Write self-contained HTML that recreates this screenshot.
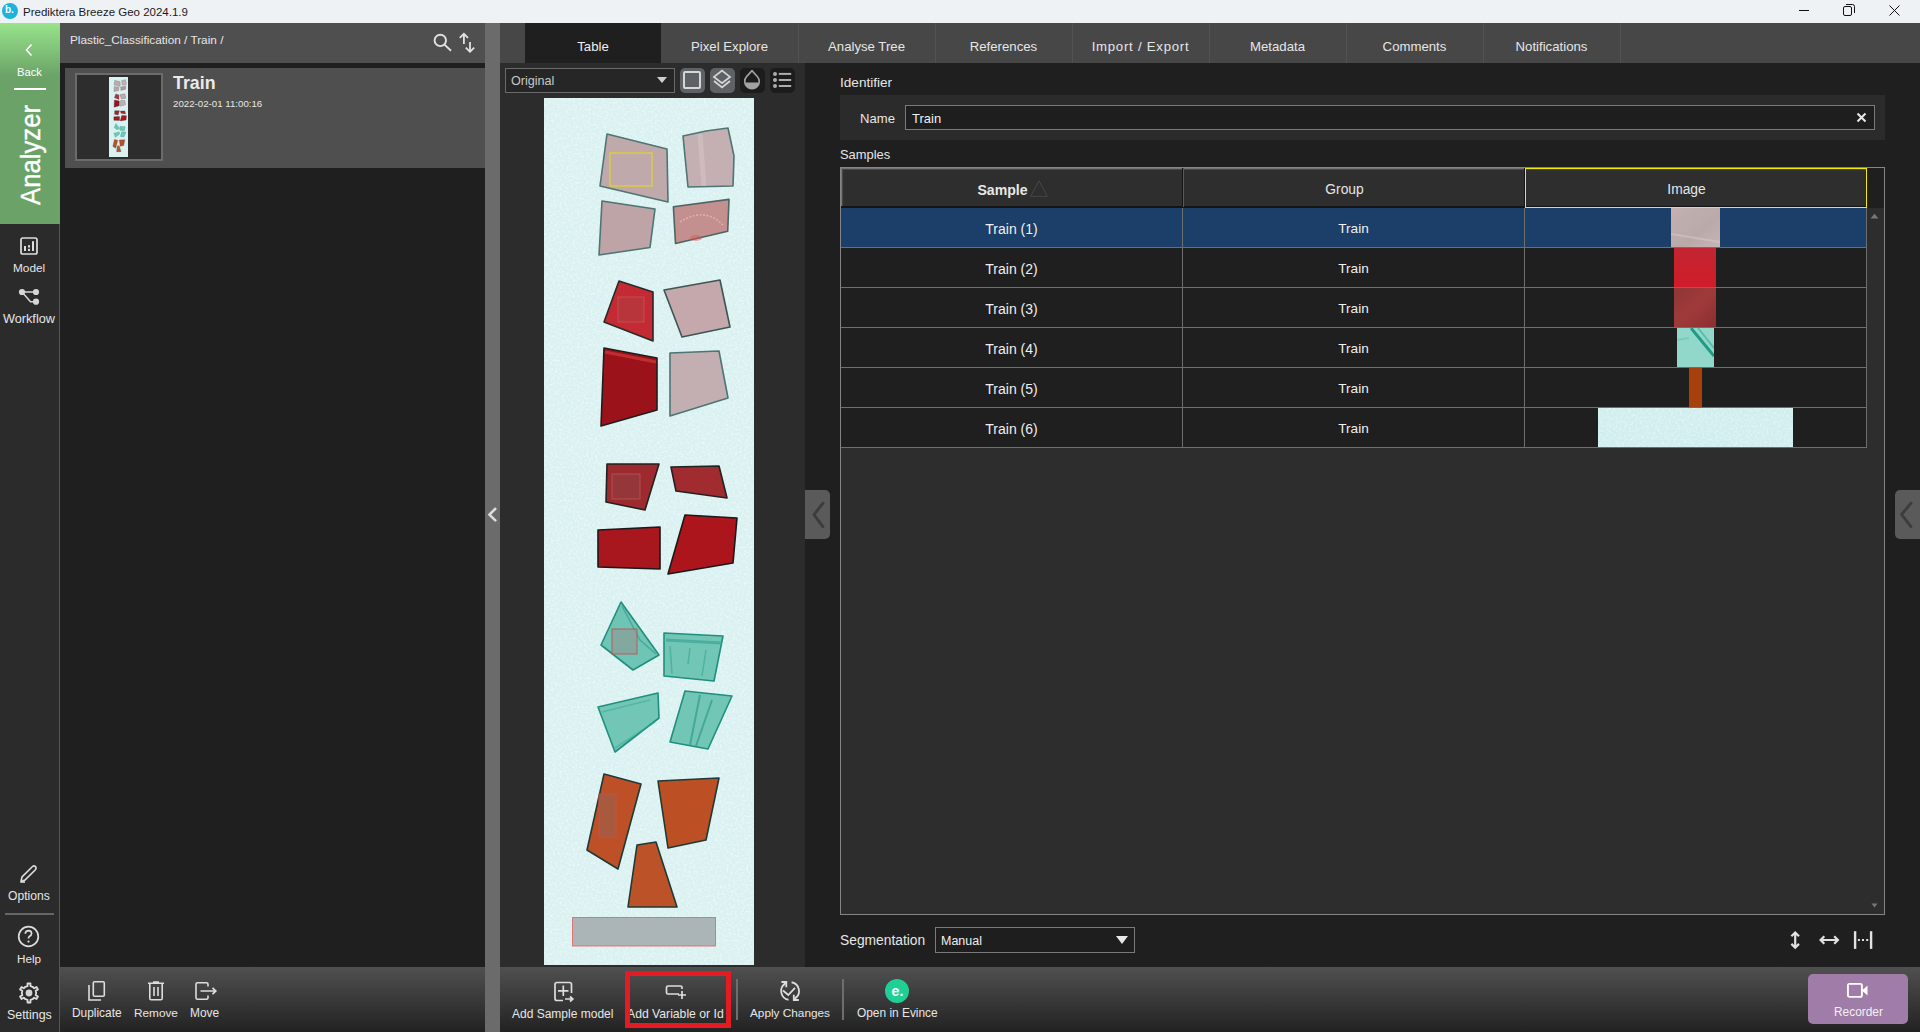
<!DOCTYPE html>
<html><head><meta charset="utf-8">
<style>
*{margin:0;padding:0;box-sizing:border-box}
html,body{width:1920px;height:1032px;overflow:hidden;background:#1f1f1f;font-family:"Liberation Sans",sans-serif;color:#e6e6e6}
.a{position:absolute}
.t{position:absolute;white-space:nowrap;line-height:1}
</style></head><body>
<!-- TITLE BAR -->
<div class="a" style="left:0;top:0;width:1920px;height:23px;background:#eef2f5"></div>
<div class="a" style="left:2px;top:3px;width:16px;height:16px;border-radius:50%;background:#1db4dc"></div>
<div class="t" style="left:5px;top:5px;font-size:10px;font-weight:bold;color:#fff">b.</div>
<div class="t" style="left:23px;top:7px;font-size:11.5px;color:#1a1a1a">Prediktera Breeze Geo 2024.1.9</div>
<div class="a" style="left:1799px;top:10px;width:10px;height:1px;background:#111"></div>
<svg class="a" style="left:1843px;top:4px" width="12" height="12" viewBox="0 0 12 12"><rect x="0.5" y="2.5" width="8" height="9" rx="1.5" fill="none" stroke="#111" stroke-width="1"/><path d="M3 0.5 H9.5 A2 2 0 0 1 11.5 2.5 V9" fill="none" stroke="#111" stroke-width="1"/></svg>
<svg class="a" style="left:1889px;top:5px" width="11" height="11" viewBox="0 0 11 11"><path d="M0.5 0.5 L10.5 10.5 M10.5 0.5 L0.5 10.5" stroke="#111" stroke-width="1"/></svg>

<!-- LEFT NAV -->
<div class="a" style="left:0;top:23px;width:60px;height:1009px;background:#2b2b2b;border-right:1px solid #555"></div>
<div class="a" style="left:0;top:23px;width:60px;height:201px;background:linear-gradient(#98e38b 0px,#6aa267 54px,#6aa267 201px)"></div>
<svg class="a" style="left:24px;top:43px" width="10" height="14" viewBox="0 0 10 14"><path d="M7.5 1.5 L2.5 7 L7.5 12.5" fill="none" stroke="#fff" stroke-width="1.6"/></svg>
<div class="t" style="left:17px;top:67px;font-size:11.2px;color:#fff">Back</div>
<div class="a" style="left:14px;top:88px;width:32px;height:2px;background:#fff"></div>
<div class="t" style="left:-24px;top:141px;width:109px;height:28px;text-align:center;font-size:28px;color:#fff;-webkit-text-stroke:0.4px #fff;transform:rotate(-90deg) scaleX(0.918)">Analyzer</div>
<!-- model -->
<svg class="a" style="left:19px;top:236px" width="20" height="20" viewBox="0 0 20 20"><rect x="2" y="2" width="16" height="16" rx="1.8" fill="none" stroke="#ddd" stroke-width="1.7"/><rect x="5" y="10" width="2" height="5" fill="#ddd"/><rect x="9" y="9.2" width="2" height="2.3" fill="#ddd"/><rect x="9" y="12.8" width="2" height="2.2" fill="#ddd"/><rect x="13" y="5.2" width="2" height="9.8" fill="#ddd"/></svg>
<div class="t" style="left:13px;top:263px;font-size:11.8px;color:#e6e6e6">Model</div>
<svg class="a" style="left:18px;top:287px" width="22" height="20" viewBox="0 0 22 20"><circle cx="4" cy="5" r="3.1" fill="#d6d6d6"/><circle cx="18" cy="5" r="3.1" fill="#d6d6d6"/><circle cx="18" cy="14.7" r="3.1" fill="#d6d6d6"/><path d="M4 5 H18 M4 5 L12.5 14.7 H18" fill="none" stroke="#d6d6d6" stroke-width="1.5"/></svg>
<div class="t" style="left:3px;top:313px;font-size:12.7px;color:#e6e6e6">Workflow</div>
<!-- options -->
<svg class="a" style="left:19px;top:864px" width="20" height="20" viewBox="0 0 20 20"><path d="M2 17.5 L3 13 L13.5 2.5 Q15 1.3 16.5 2.6 Q17.8 4 16.6 5.5 L6 16 Z" fill="none" stroke="#ddd" stroke-width="1.6"/><path d="M2 18 H6" stroke="#ddd" stroke-width="1.6"/></svg>
<div class="t" style="left:8px;top:890px;font-size:12.1px;color:#e6e6e6">Options</div>
<div class="a" style="left:5px;top:913px;width:49px;height:2px;background:#666"></div>
<svg class="a" style="left:17px;top:925px" width="23" height="23" viewBox="0 0 23 23"><circle cx="11.5" cy="11.5" r="9.8" fill="none" stroke="#ddd" stroke-width="1.7"/><path d="M8.3 8.8 Q8.5 5.6 11.6 5.6 Q14.6 5.7 14.6 8.5 Q14.5 10.3 12.6 11.3 Q11.5 12 11.5 13.6" fill="none" stroke="#ddd" stroke-width="1.7"/><circle cx="11.5" cy="16.6" r="1.1" fill="#ddd"/></svg>
<div class="t" style="left:17px;top:953px;font-size:11.7px;color:#e6e6e6">Help</div>
<svg class="a" style="left:18px;top:982px" width="22" height="22" viewBox="0 0 22 22"><path d="M9.54 4.15 L9.50 1.52 L12.50 1.52 L12.46 4.15 L14.60 4.76 L16.20 6.32 L18.46 4.96 L19.96 7.56 L17.66 8.84 L18.20 11.00 L17.66 13.16 L19.96 14.44 L18.46 17.04 L16.20 15.68 L14.60 17.24 L12.46 17.85 L12.50 20.48 L9.50 20.48 L9.54 17.85 L7.40 17.24 L5.80 15.68 L3.54 17.04 L2.04 14.44 L4.34 13.16 L3.80 11.00 L4.34 8.84 L2.04 7.56 L3.54 4.96 L5.80 6.32 L7.40 4.76 Z" fill="none" stroke="#ddd" stroke-width="1.8" stroke-linejoin="round"/><circle cx="11" cy="11" r="3.4" fill="#d4d4d4"/></svg>
<div class="t" style="left:7px;top:1009px;font-size:12.4px;color:#e6e6e6">Settings</div>

<!-- LEFT PANEL -->
<div class="a" style="left:60px;top:23px;width:425px;height:40px;background:#4f4f4f"></div>
<div class="t" style="left:70px;top:35px;font-size:11.8px;color:#e6e6e6">Plastic_Classification / Train /</div>
<svg class="a" style="left:430px;top:30px" width="24" height="26" viewBox="0 0 24 26"><circle cx="10.3" cy="10.4" r="5.7" fill="none" stroke="#e2e2e2" stroke-width="1.9"/><path d="M14.5 14.6 L21 20.8" stroke="#e2e2e2" stroke-width="1.9"/></svg>
<svg class="a" style="left:455px;top:30px" width="24" height="26" viewBox="0 0 24 26"><path d="M8.9 4 V14 M4.8 7.9 L8.9 3.8 L13 7.9" fill="none" stroke="#e2e2e2" stroke-width="1.8"/><path d="M15 12 V21.5 M10.8 17.7 L15 21.8 L19.2 17.7" fill="none" stroke="#e2e2e2" stroke-width="1.8"/></svg>
<div class="a" style="left:65px;top:68px;width:420px;height:100px;background:#4f4f4f"></div>
<div class="a" style="left:75px;top:73px;width:88px;height:88px;background:#2d2d2d;border:2px solid #6b6b6b"></div><!--THUMBSLOT--><!--THUMB--><svg class="a" style="left:109px;top:77px" width="19" height="80" viewBox="544 98 210 867" preserveAspectRatio="none">
<rect x="544" y="98" width="210" height="867" fill="#daf1f1"/>
<polygon points="607,134 667,149 668,202 600,186" fill="#c0a9ab" stroke="#4d7573" stroke-width="3" stroke-linejoin="round"/>
<polygon points="683,136 706,131 728,128 734,156 733,186 688,187" fill="#c4b0b2" stroke="#4d7573" stroke-width="3" stroke-linejoin="round"/>
<polygon points="602,201 655,209 650,247.5 599,255" fill="#bea4a7" stroke="#4d7573" stroke-width="3" stroke-linejoin="round"/>
<polygon points="673.4,206.8 729,199.4 727.7,231.3 675.5,243.5" fill="#c48f8f" stroke="#4d6563" stroke-width="3" stroke-linejoin="round"/>
<polygon points="619,281 653,292 653,341 604,322" fill="#c32a33" stroke="#2a2a2a" stroke-width="3" stroke-linejoin="round"/>
<polygon points="664,290 720,280 730,327 682,337" fill="#c4a8ab" stroke="#3d5553" stroke-width="3" stroke-linejoin="round"/>
<polygon points="604,348 657,358 657,410 601,426" fill="#9c121a" stroke="#1e1e1e" stroke-width="3" stroke-linejoin="round"/>
<polygon points="670,353 719,351 728,398 670,416" fill="#c3aeb1" stroke="#4d7573" stroke-width="3" stroke-linejoin="round"/>
<polygon points="607,464 659,464 645,510 606,502" fill="#9c2a2e" stroke="#222" stroke-width="3" stroke-linejoin="round"/>
<polygon points="671,467 719,466 727,498 676,491" fill="#a02c2f" stroke="#222" stroke-width="3" stroke-linejoin="round"/>
<polygon points="598,530 660,527 660,569 598,567" fill="#a8161e" stroke="#1a1a1a" stroke-width="3" stroke-linejoin="round"/>
<polygon points="685,515 737,518 733,563 668,574" fill="#ad151d" stroke="#1a1a1a" stroke-width="3" stroke-linejoin="round"/>
<polygon points="621,602 659,655 633,670 601,645" fill="#6fc5b5" stroke="#1f8f7e" stroke-width="3" stroke-linejoin="round"/>
<polygon points="664,633 723,636 714,681 664,676" fill="#72c6b6" stroke="#1f8f7e" stroke-width="3" stroke-linejoin="round"/>
<polygon points="598,707 658,693 659,718 615,752" fill="#72c6b6" stroke="#1f8f7e" stroke-width="3" stroke-linejoin="round"/>
<polygon points="685,691 732,696 708,749 670,742" fill="#72c6b6" stroke="#1f8f7e" stroke-width="3" stroke-linejoin="round"/>
<polygon points="604,774 641,784 618,869 587,850" fill="#bd5026" stroke="#1f3a36" stroke-width="3" stroke-linejoin="round"/>
<polygon points="658,781 719,778 706,840 668,848" fill="#bd4f25" stroke="#1f3a36" stroke-width="3" stroke-linejoin="round"/>
<polygon points="637,845 656,842 677,907 628,907" fill="#bb5228" stroke="#1f3a36" stroke-width="3" stroke-linejoin="round"/>
</svg><!--/THUMB-->
<div class="t" style="left:173px;top:75px;font-size:17.8px;font-weight:bold;color:#eaeaea">Train</div>
<div class="t" style="left:173px;top:99px;font-size:9.7px;color:#e6e6e6">2022-02-01 11:00:16</div>
<div class="a" style="left:60px;top:967px;width:425px;height:65px;background:linear-gradient(#505050,#222)"></div>
<!-- SPLITTER -->
<div class="a" style="left:485px;top:23px;width:15px;height:1009px;background:#6b6b6b"></div>
<svg class="a" style="left:487px;top:507px" width="11" height="15" viewBox="0 0 11 15"><path d="M8.3 1.8 L2.4 7.6 L8.3 13.4" fill="none" stroke="#ddd" stroke-width="2.6" stroke-linecap="round" stroke-linejoin="round"/></svg>

<!-- TAB BAR -->
<div class="a" style="left:500px;top:23px;width:1420px;height:40px;background:#474747"></div>
<div class="a" style="left:525px;top:23px;width:136px;height:40px;background:#1f1f1f"></div>
<div class="a" style="left:798px;top:23px;width:1px;height:40px;background:#525252"></div>
<div class="a" style="left:935px;top:23px;width:1px;height:40px;background:#525252"></div>
<div class="a" style="left:1072px;top:23px;width:1px;height:40px;background:#525252"></div>
<div class="a" style="left:1209px;top:23px;width:1px;height:40px;background:#525252"></div>
<div class="a" style="left:1346px;top:23px;width:1px;height:40px;background:#525252"></div>
<div class="a" style="left:1483px;top:23px;width:1px;height:40px;background:#525252"></div>
<div class="a" style="left:1620px;top:23px;width:1px;height:40px;background:#525252"></div>
<div class="t" style="left:525px;width:136px;text-align:center;top:40px;font-size:13.2px;color:#f0f0f0">Table</div>
<div class="t" style="left:661px;width:137px;text-align:center;top:40px;font-size:13.2px;color:#e6e6e6">Pixel Explore</div>
<div class="t" style="left:798px;width:137px;text-align:center;top:40px;font-size:13.2px;color:#e6e6e6">Analyse Tree</div>
<div class="t" style="left:935px;width:137px;text-align:center;top:40px;font-size:13.2px;color:#e6e6e6">References</div>
<div class="t" style="left:1072px;width:137px;text-align:center;top:40px;font-size:13.2px;color:#e6e6e6;letter-spacing:0.75px">Import / Export</div>
<div class="t" style="left:1209px;width:137px;text-align:center;top:40px;font-size:13.2px;color:#e6e6e6">Metadata</div>
<div class="t" style="left:1346px;width:137px;text-align:center;top:40px;font-size:13.2px;color:#e6e6e6">Comments</div>
<div class="t" style="left:1483px;width:137px;text-align:center;top:40px;font-size:13.2px;color:#e6e6e6">Notifications</div>

<!-- CENTER PANEL -->
<div class="a" style="left:500px;top:63px;width:305px;height:904px;background:#2c2c2c"></div>
<div class="a" style="left:505px;top:68px;width:170px;height:25px;background:#262626;border:1px solid #6a6a6a"></div>
<div class="t" style="left:511px;top:75px;font-size:12.6px;color:#c8c8c8">Original</div>
<svg class="a" style="left:656px;top:76px" width="12" height="8" viewBox="0 0 12 8"><path d="M1 1 H11 L6 7 Z" fill="#cfcfcf"/></svg>
<div class="a" style="left:680px;top:68px;width:25px;height:25px;border-radius:5px;background:#5f6265"></div>
<div class="a" style="left:683px;top:71px;width:18px;height:18px;border-radius:2px;border:2px solid #d6d6d6"></div>
<div class="a" style="left:710px;top:68px;width:25px;height:25px;border-radius:5px;background:#5f6265"></div>
<svg class="a" style="left:711px;top:68px" width="22" height="22" viewBox="0 0 22 22"><path d="M11 2.6 L19 8.9 L11 15.2 L3 8.9 Z" fill="none" stroke="#d6d6d6" stroke-width="1.8" stroke-linejoin="miter"/><path d="M3 13 L11 19.4 L19 13" fill="none" stroke="#d6d6d6" stroke-width="1.8"/></svg>
<div class="a" style="left:740px;top:68px;width:25px;height:25px;border-radius:5px;background:#1c1c1c"></div>
<svg class="a" style="left:742px;top:69px" width="20" height="22" viewBox="0 0 20 22"><path d="M10 1.6 L4.54 7.66 A7.3 7.3 0 1 0 15.46 7.66 Z" fill="none" stroke="#a2a2a2" stroke-width="1.6" stroke-linejoin="round"/><path d="M2.74 13.4 H17.26 A7.3 7.3 0 0 1 2.74 13.4 Z" fill="#a2a2a2"/></svg>
<div class="a" style="left:770px;top:68px;width:25px;height:25px;border-radius:5px;background:#1c1c1c"></div>
<svg class="a" style="left:771px;top:69px" width="24" height="22" viewBox="0 0 24 22"><g fill="#acacac"><circle cx="4" cy="4.9" r="2"/><circle cx="4" cy="11" r="2"/><circle cx="4" cy="17" r="2"/><rect x="7.8" y="3.9" width="12.4" height="2"/><rect x="7.8" y="10" width="12.4" height="2"/><rect x="7.8" y="16" width="12.4" height="2"/></g></svg>
<!--IMGSLOT--><!--IMG--><svg width="0" height="0" style="position:absolute"><filter id="nz"><feTurbulence type="fractalNoise" baseFrequency="0.45" numOctaves="2" seed="3"/><feColorMatrix values="0 0 0 0 1  0 0 0 0 1  0 0 0 0 1  0 0 0 1.6 -0.7"/></filter></svg><svg class="a" style="left:544px;top:98px" width="210" height="867" viewBox="544 98 210 867" preserveAspectRatio="none">
<rect x="544" y="98" width="210" height="867" fill="#daf1f1"/>
<rect x="544" y="98" width="210" height="867" fill="#f2fdfd" opacity="0.75" filter="url(#nz)"/>
<polygon points="607,134 667,149 668,202 600,186" fill="#c0a9ab" stroke="#4d7573" stroke-width="1.6" stroke-linejoin="round"/>
<polygon points="683,136 706,131 728,128 734,156 733,186 688,187" fill="#c4b0b2" stroke="#4d7573" stroke-width="1.6" stroke-linejoin="round"/>
<polygon points="602,201 655,209 650,247.5 599,255" fill="#bea4a7" stroke="#4d7573" stroke-width="1.6" stroke-linejoin="round"/>
<polygon points="673.4,206.8 729,199.4 727.7,231.3 675.5,243.5" fill="#c48f8f" stroke="#4d6563" stroke-width="1.6" stroke-linejoin="round"/>
<polygon points="619,281 653,292 653,341 604,322" fill="#c32a33" stroke="#2a2a2a" stroke-width="1.6" stroke-linejoin="round"/>
<polygon points="664,290 720,280 730,327 682,337" fill="#c4a8ab" stroke="#3d5553" stroke-width="1.6" stroke-linejoin="round"/>
<polygon points="604,348 657,358 657,410 601,426" fill="#9c121a" stroke="#1e1e1e" stroke-width="1.6" stroke-linejoin="round"/>
<polygon points="670,353 719,351 728,398 670,416" fill="#c3aeb1" stroke="#4d7573" stroke-width="1.6" stroke-linejoin="round"/>
<polygon points="607,464 659,464 645,510 606,502" fill="#9c2a2e" stroke="#222" stroke-width="1.6" stroke-linejoin="round"/>
<polygon points="671,467 719,466 727,498 676,491" fill="#a02c2f" stroke="#222" stroke-width="1.6" stroke-linejoin="round"/>
<polygon points="598,530 660,527 660,569 598,567" fill="#a8161e" stroke="#1a1a1a" stroke-width="1.6" stroke-linejoin="round"/>
<polygon points="685,515 737,518 733,563 668,574" fill="#ad151d" stroke="#1a1a1a" stroke-width="1.6" stroke-linejoin="round"/>
<polygon points="621,602 659,655 633,670 601,645" fill="#6fc5b5" stroke="#1f8f7e" stroke-width="1.6" stroke-linejoin="round"/>
<polygon points="664,633 723,636 714,681 664,676" fill="#72c6b6" stroke="#1f8f7e" stroke-width="1.6" stroke-linejoin="round"/>
<polygon points="598,707 658,693 659,718 615,752" fill="#72c6b6" stroke="#1f8f7e" stroke-width="1.6" stroke-linejoin="round"/>
<polygon points="685,691 732,696 708,749 670,742" fill="#72c6b6" stroke="#1f8f7e" stroke-width="1.6" stroke-linejoin="round"/>
<polygon points="604,774 641,784 618,869 587,850" fill="#bd5026" stroke="#1f3a36" stroke-width="1.6" stroke-linejoin="round"/>
<polygon points="658,781 719,778 706,840 668,848" fill="#bd4f25" stroke="#1f3a36" stroke-width="1.6" stroke-linejoin="round"/>
<polygon points="637,845 656,842 677,907 628,907" fill="#bb5228" stroke="#1f3a36" stroke-width="1.6" stroke-linejoin="round"/>
<path d="M666 640 L722 643" stroke="#3aa696" stroke-width="3" opacity="0.7"/>
<path d="M670 646 L672 674 M690 648 L688 664 M706 650 L702 676" stroke="#3aa696" stroke-width="1.6" opacity="0.6"/>
<path d="M700 695 L690 745 M712 700 L696 746" stroke="#2f9888" stroke-width="2" opacity="0.65"/>
<path d="M622 606 L640 640 L656 654" stroke="#2f9888" stroke-width="1.6" fill="none" opacity="0.6"/>
<path d="M602 712 L650 700 M615 748 L655 722" stroke="#3aa696" stroke-width="1.5" fill="none" opacity="0.5"/>
<path d="M605 352 L656 362" stroke="#d03a3a" stroke-width="3" opacity="0.7"/>
<path d="M680 222 Q705 206 724 226" stroke="#e6b0b0" stroke-width="1.4" fill="none" stroke-dasharray="2 1.5"/>
<ellipse cx="696" cy="238" rx="6" ry="3" fill="#e05050" opacity="0.45"/>
<path d="M700 134 L704 186" stroke="#d8c6c8" stroke-width="5" opacity="0.5"/>
<rect x="610" y="153" width="42" height="33" fill="none" fill-opacity="1" stroke="#f0e000" stroke-width="0.9"/>
<rect x="618" y="297" width="26" height="25" fill="#a04a4a" fill-opacity="0.35" stroke="#c85050" stroke-width="0.9"/>
<rect x="612" y="474" width="28" height="25" fill="#8a5050" fill-opacity="0.35" stroke="#b85050" stroke-width="0.9"/>
<rect x="612" y="629" width="25" height="25" fill="#8a9d9a" fill-opacity="0.75" stroke="#c05050" stroke-width="0.9"/>
<rect x="599" y="794" width="17" height="43" fill="#9a6050" fill-opacity="0.6" stroke="#c85050" stroke-width="0.9"/>
<rect x="572.5" y="917.5" width="143.0" height="28.5" fill="#abb5b7" fill-opacity="1" stroke="#e26a6a" stroke-width="0.9"/>
</svg><!--/IMG-->
<!-- collapse tab -->
<div class="a" style="left:805px;top:490px;width:25px;height:49px;background:#5a5a5a;border-radius:0 5px 5px 0"></div>
<svg class="a" style="left:811px;top:500px" width="16" height="30" viewBox="0 0 16 30"><path d="M12 3.2 L3 14.7 L12 26.8" fill="none" stroke="#3c3c3c" stroke-width="2.8" stroke-linecap="round" stroke-linejoin="round"/></svg>

<!-- RIGHT PANEL -->
<div class="t" style="left:840px;top:76px;font-size:13.6px;color:#e6e6e6">Identifier</div>
<div class="a" style="left:840px;top:95px;width:1045px;height:45px;background:#2b2b2b"></div>
<div class="t" style="left:860px;top:112px;font-size:13.1px;color:#e6e6e6">Name</div>
<div class="a" style="left:905px;top:105px;width:970px;height:25px;background:#1e1e1e;border:1px solid #7a7a7a"></div>
<div class="t" style="left:912px;top:112px;font-size:13px;color:#f0f0f0">Train</div>
<svg class="a" style="left:1856px;top:112px" width="11" height="11" viewBox="0 0 11 11"><path d="M1.5 1.5 L9.5 9.5 M9.5 1.5 L1.5 9.5" stroke="#e8e8e8" stroke-width="2"/></svg>
<div class="t" style="left:840px;top:149px;font-size:12.9px;color:#e6e6e6">Samples</div>
<!-- table -->
<div class="a" style="left:840px;top:167px;width:1045px;height:748px;background:#2d2d2d;border:1px solid #858585"></div>
<div class="a" style="left:841px;top:168px;width:1026px;height:39px;background:#2e2e2e;box-shadow:inset 1px 1px 0 #747474,inset 2px 2px 1px #4a4a4a"></div>
<div class="a" style="left:841px;top:206px;width:1026px;height:2px;background:#141414"></div>
<div class="a" style="left:1182px;top:168px;width:1px;height:39px;background:#141414"></div>
<div class="a" style="left:1183px;top:168px;width:1px;height:39px;background:#5a5a5a"></div>
<div class="a" style="left:1524px;top:168px;width:1px;height:39px;background:#141414"></div>
<div class="a" style="left:1525px;top:168px;width:342px;height:40px;border:1px solid #f2ea00"></div>
<div class="a" style="left:1867px;top:168px;width:17px;height:40px;background:#1f1f1f"></div>
<div class="a" style="left:1867px;top:208px;width:17px;height:706px;background:#2d2d2d"></div>
<svg class="a" style="left:1870px;top:213px" width="9" height="6" viewBox="0 0 9 6"><path d="M0.5 5.5 L4.5 0.8 L8.5 5.5 Z" fill="#777"/></svg>
<svg class="a" style="left:1871px;top:903px" width="7" height="5" viewBox="0 0 7 5"><path d="M0.5 0.5 L3.5 4.5 L6.5 0.5 Z" fill="#777"/></svg>
<div class="t" style="left:841px;width:342px;text-align:center;top:183px;font-size:14.1px;font-weight:bold;color:#e8e8e8;padding-right:19px">Sample</div>
<svg class="a" style="left:1030px;top:180px" width="18" height="17" viewBox="0 0 18 17"><path d="M9 0.8 L17.3 16.3 H0.7 Z" fill="none" stroke="#474747" stroke-width="1"/></svg>
<div class="t" style="left:1183px;width:342px;text-align:center;top:183px;font-size:13.8px;color:#e6e6e6;padding-right:19px">Group</div>
<div class="t" style="left:1525px;width:342px;text-align:center;top:183px;font-size:13.8px;color:#e6e6e6;padding-right:19px">Image</div>
<!-- rows -->
<div class="a" style="left:841px;top:208px;width:1026px;height:39px;background:#1c3f6a"></div>
<div class="a" style="left:841px;top:247px;width:1026px;height:1px;background:#6e6e6e"></div>
<svg class="a" style="left:1671px;top:208px" width="49" height="39"><defs><linearGradient id="r1" x1="0" y1="0" x2="1" y2="1"><stop offset="0" stop-color="#c4b0b2"/><stop offset="0.6" stop-color="#b9aaa9"/><stop offset="1" stop-color="#c8b4b6"/></linearGradient></defs><rect width="49" height="39" fill="url(#r1)"/><path d="M0 26 L49 34" stroke="#d6c6c8" stroke-width="2" opacity="0.6"/></svg>
<div class="t" style="left:841px;width:341px;text-align:center;top:222px;font-size:14px;color:#f0f0f0">Train (1)</div>
<div class="t" style="left:1183px;width:341px;text-align:center;top:222px;font-size:13.6px;color:#f0f0f0">Train</div>
<div class="a" style="left:841px;top:248px;width:1026px;height:39px;background:#1f1f1f"></div>
<div class="a" style="left:841px;top:287px;width:1026px;height:1px;background:#6e6e6e"></div>
<svg class="a" style="left:1674px;top:248px" width="42" height="39"><defs><linearGradient id="r2" x1="0" y1="0" x2="0" y2="1"><stop offset="0" stop-color="#c22532"/><stop offset="1" stop-color="#d01c28"/></linearGradient></defs><rect width="42" height="39" fill="url(#r2)"/></svg>
<div class="t" style="left:841px;width:341px;text-align:center;top:262px;font-size:14px;color:#f0f0f0">Train (2)</div>
<div class="t" style="left:1183px;width:341px;text-align:center;top:262px;font-size:13.6px;color:#f0f0f0">Train</div>
<div class="a" style="left:841px;top:288px;width:1026px;height:39px;background:#1f1f1f"></div>
<div class="a" style="left:841px;top:327px;width:1026px;height:1px;background:#6e6e6e"></div>
<svg class="a" style="left:1674px;top:288px" width="42" height="39"><defs><linearGradient id="r3" x1="0" y1="0" x2="1" y2="1"><stop offset="0" stop-color="#903535"/><stop offset="0.5" stop-color="#a03a3a"/><stop offset="1" stop-color="#8a2e30"/></linearGradient></defs><rect width="42" height="39" fill="url(#r3)"/></svg>
<div class="t" style="left:841px;width:341px;text-align:center;top:302px;font-size:14px;color:#f0f0f0">Train (3)</div>
<div class="t" style="left:1183px;width:341px;text-align:center;top:302px;font-size:13.6px;color:#f0f0f0">Train</div>
<div class="a" style="left:841px;top:328px;width:1026px;height:39px;background:#1f1f1f"></div>
<div class="a" style="left:841px;top:367px;width:1026px;height:1px;background:#6e6e6e"></div>
<svg class="a" style="left:1677px;top:328px" width="37" height="39"><rect width="37" height="39" fill="#92d8ca"/><path d="M14 0 L37 28" stroke="#1f9a88" stroke-width="3"/><path d="M21 0 L37 20" stroke="#5cbcac" stroke-width="2"/><path d="M0 12 L12 10" stroke="#6cc8b8" stroke-width="2" opacity="0.7"/></svg>
<div class="t" style="left:841px;width:341px;text-align:center;top:342px;font-size:14px;color:#f0f0f0">Train (4)</div>
<div class="t" style="left:1183px;width:341px;text-align:center;top:342px;font-size:13.6px;color:#f0f0f0">Train</div>
<div class="a" style="left:841px;top:368px;width:1026px;height:39px;background:#1f1f1f"></div>
<div class="a" style="left:841px;top:407px;width:1026px;height:1px;background:#6e6e6e"></div>
<div class="a" style="left:1689px;top:368px;width:13px;height:39px;background:#a8400e"></div>
<div class="t" style="left:841px;width:341px;text-align:center;top:382px;font-size:14px;color:#f0f0f0">Train (5)</div>
<div class="t" style="left:1183px;width:341px;text-align:center;top:382px;font-size:13.6px;color:#f0f0f0">Train</div>
<div class="a" style="left:841px;top:408px;width:1026px;height:39px;background:#1f1f1f"></div>
<div class="a" style="left:841px;top:447px;width:1026px;height:1px;background:#6e6e6e"></div>
<svg class="a" style="left:1598px;top:408px" width="195" height="39"><rect width="195" height="39" fill="#d0eeee"/><rect width="195" height="39" fill="#f2fdfd" opacity="0.7" filter="url(#nz)"/></svg>
<div class="t" style="left:841px;width:341px;text-align:center;top:422px;font-size:14px;color:#f0f0f0">Train (6)</div>
<div class="t" style="left:1183px;width:341px;text-align:center;top:422px;font-size:13.6px;color:#f0f0f0">Train</div>
<div class="a" style="left:1182px;top:208px;width:1px;height:240px;background:#6e6e6e"></div>
<div class="a" style="left:1524px;top:208px;width:1px;height:240px;background:#6e6e6e"></div>
<div class="a" style="left:1866px;top:208px;width:1px;height:240px;background:#6e6e6e"></div>
<!-- segmentation -->
<div class="t" style="left:840px;top:934px;font-size:13.8px;color:#e6e6e6">Segmentation</div>
<div class="a" style="left:935px;top:927px;width:200px;height:26px;background:#1e1e1e;border:1px solid #7a7a7a"></div>
<div class="t" style="left:941px;top:935px;font-size:12.5px;color:#f0f0f0">Manual</div>
<svg class="a" style="left:1115px;top:935px" width="14" height="10" viewBox="0 0 14 10"><path d="M1 1 H13 L7 9 Z" fill="#e8e8e8"/></svg>
<svg class="a" style="left:1785px;top:928px" width="20" height="24" viewBox="0 0 20 24"><path d="M10.2 4.6 V19.6 M6.4 8.3 L10.2 4.5 L14 8.3 M6.4 15.9 L10.2 19.7 L14 15.9" fill="none" stroke="#e2e2e2" stroke-width="2.2"/></svg>
<svg class="a" style="left:1815px;top:930px" width="28" height="20" viewBox="0 0 28 20"><path d="M6 10 H22.5 M9.3 6.3 L5.6 10 L9.3 13.7 M19.2 6.3 L22.9 10 L19.2 13.7" fill="none" stroke="#e2e2e2" stroke-width="2.2"/></svg>
<svg class="a" style="left:1850px;top:928px" width="26" height="24" viewBox="0 0 26 24"><g fill="#e2e2e2"><rect x="3.9" y="3.2" width="2.4" height="17.7"/><rect x="19.9" y="3.2" width="2.4" height="17.7"/><rect x="7.9" y="11" width="2" height="2"/><rect x="12" y="11" width="2" height="2"/><rect x="16.2" y="11" width="2" height="2"/></g></svg>
<div class="a" style="left:1895px;top:490px;width:25px;height:49px;background:#5a5a5a;border-radius:5px 0 0 5px"></div>
<svg class="a" style="left:1899px;top:500px" width="16" height="30" viewBox="0 0 16 30"><path d="M12 3.2 L2.6 14.5 L12 26.7" fill="none" stroke="#3c3c3c" stroke-width="2.8" stroke-linecap="round" stroke-linejoin="round"/></svg>

<!-- BOTTOM TOOLBAR -->
<div class="a" style="left:500px;top:967px;width:1420px;height:65px;background:linear-gradient(#505050,#222)"></div>
<svg class="a" style="left:553px;top:981px" width="22" height="22" viewBox="0 0 22 22"><path d="M10 19.5 H4 Q2 19.5 2 17.5 V3.5 Q2 1.5 4 1.5 H16.5 Q18.5 1.5 18.5 3.5 V12" fill="none" stroke="#ddd" stroke-width="1.7"/><path d="M10.3 4.5 V15 M5 9.8 H15.5" stroke="#ddd" stroke-width="1.7"/><path d="M12 18 H19.5 M17 15.5 L19.8 18 L17 20.5" fill="none" stroke="#ddd" stroke-width="1.7"/></svg>
<div class="t" style="left:512px;top:1007.5px;font-size:12px;color:#e6e6e6">Add Sample model</div>
<svg class="a" style="left:665px;top:985px" width="23" height="15" viewBox="0 0 23 15"><path d="M14 9 H3 Q1.5 9 1.5 7.5 V2.5 Q1.5 1 3 1 H15.5 Q17 1 17 2.5 V4" fill="none" stroke="#ddd" stroke-width="1.7"/><path d="M17 6 V14 M13 10 H21" stroke="#ddd" stroke-width="1.7"/></svg>
<div class="t" style="left:627px;top:1007.5px;font-size:12.2px;color:#e6e6e6">Add Variable or Id</div>
<div class="a" style="left:625px;top:971px;width:106px;height:57px;border:5px solid #e41b22"></div>
<div class="a" style="left:736px;top:979px;width:2px;height:41px;background:#6e6e6e"></div>
<svg class="a" style="left:779px;top:980px" width="22" height="23" viewBox="0 0 22 23"><path d="M5.95 3.7 A8.9 8.9 0 0 0 9.5 19.75" fill="none" stroke="#ddd" stroke-width="1.8"/><path d="M12.6 2.24 A8.9 8.9 0 0 1 16.16 18.3" fill="none" stroke="#ddd" stroke-width="1.8"/><path d="M2.4 2 H7.3 V7.2" fill="none" stroke="#ddd" stroke-width="1.8"/><path d="M19.8 20 H14.8 V14.8" fill="none" stroke="#ddd" stroke-width="1.8"/><path d="M7.3 2 L4.5 5" stroke="#ddd" stroke-width="1.8"/><path d="M14.8 20 L17.3 17" stroke="#ddd" stroke-width="1.8"/><path d="M3.94 10.55 L9.3 15.06 L16 7.94" fill="none" stroke="#ddd" stroke-width="1.8"/></svg>
<div class="t" style="left:750px;top:1008px;font-size:11.8px;color:#e6e6e6">Apply Changes</div>
<div class="a" style="left:842px;top:979px;width:2px;height:41px;background:#6e6e6e"></div>
<div class="a" style="left:885px;top:979px;width:24px;height:24px;border-radius:50%;background:#20cf96"></div>
<div class="t" style="left:891.5px;top:984px;font-size:14px;font-weight:bold;color:#fff;letter-spacing:0.3px">e.</div>
<div class="t" style="left:857px;top:1008px;font-size:11.9px;color:#e6e6e6">Open in Evince</div>
<div class="a" style="left:1808px;top:974px;width:100px;height:50px;border-radius:5px;background:#a07ca8"></div>
<svg class="a" style="left:1846px;top:981px" width="23" height="19" viewBox="0 0 23 19"><rect x="1.9" y="2.9" width="14" height="13" rx="1.6" fill="none" stroke="#fff" stroke-width="1.9"/><path d="M16 9.5 L21.5 4.5 V14.5 Z" fill="#fff"/></svg>
<div class="t" style="left:1834px;top:1007px;font-size:11.9px;color:#f2f2f2">Recorder</div>
<!-- left toolbar items -->
<svg class="a" style="left:87px;top:980px" width="20" height="22" viewBox="0 0 20 22"><rect x="6.3" y="1.8" width="11" height="14.5" rx="1.3" fill="none" stroke="#ddd" stroke-width="1.6"/><path d="M2 5 V20 H14" fill="none" stroke="#ddd" stroke-width="1.6"/></svg>
<div class="t" style="left:72px;top:1007.6px;font-size:11.9px;color:#e6e6e6">Duplicate</div>
<svg class="a" style="left:147px;top:981px" width="18" height="20" viewBox="0 0 18 20"><path d="M1 2.3 H17 M6 1 H12" stroke="#ddd" stroke-width="1.6"/><path d="M2.8 3 V17.5 Q2.8 18.8 4.2 18.8 H13.8 Q15.2 18.8 15.2 17.5 V3" fill="none" stroke="#ddd" stroke-width="1.6"/><path d="M7 6 V15 M11 6 V15" stroke="#ddd" stroke-width="1.6"/></svg>
<div class="t" style="left:134px;top:1007.6px;font-size:11.8px;color:#e6e6e6">Remove</div>
<svg class="a" style="left:194px;top:981px" width="24" height="20" viewBox="0 0 24 20"><path d="M14 5.5 V3.3 Q14 1.8 12.5 1.8 H3.5 Q2 1.8 2 3.3 V16.7 Q2 18.2 3.5 18.2 H12.5 Q14 18.2 14 16.7 V14.5" fill="none" stroke="#ddd" stroke-width="1.6"/><path d="M6.5 10 H21.5 M18.5 6.8 L21.8 10 L18.5 13.2" fill="none" stroke="#ddd" stroke-width="1.7"/></svg>
<div class="t" style="left:190px;top:1007.6px;font-size:11.9px;color:#e6e6e6">Move</div>
</body></html>
